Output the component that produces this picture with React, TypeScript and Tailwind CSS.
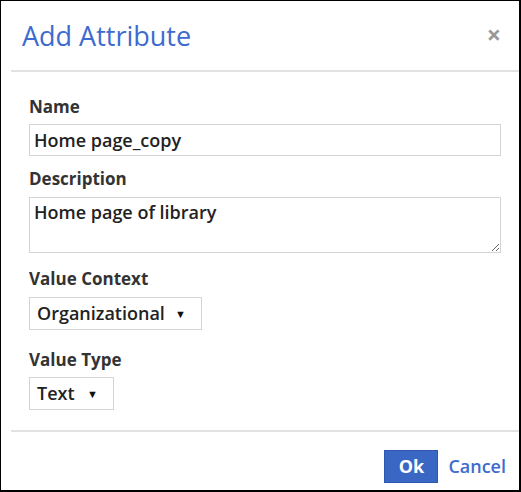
import React from 'react';

const Caret: React.FC = () => (
  <span className="text-[11px] leading-none text-[#111]">▼</span>
);

const App: React.FC = () => {
  return (
    <div className="w-[521px] h-[492px] bg-white border-l border-t border-r-2 border-b-2 border-black font-['Open_Sans',sans-serif] text-[#333] flex flex-col">
      {/* Header */}
      <div className="flex items-start justify-between h-[69px] pl-[21px] pr-[18px] pt-[16px]">
        <h1 className="text-[27px] leading-[38px] text-[#3d6bcf] font-normal">Add Attribute</h1>
        <button className="text-[25px] leading-none font-bold text-[#999] mt-[5px]">×</button>
      </div>
      <div className="ml-[10px] h-[2px] bg-[#e2e2e2]" />

      {/* Body */}
      <div className="flex flex-col pl-[28px] pr-[18px] pt-[25px] flex-1">
        <label className="text-[17px] leading-[20px] font-bold text-[#333]">Name</label>
        <input
          readOnly
          value="Home page_copy"
          className="mt-[7px] h-[32px] w-full border border-[#d4d4d4] px-[4px] text-[18px] font-semibold text-[#222] outline-none"
        />
        <label className="mt-[13px] text-[17px] leading-[20px] font-bold text-[#333]">Description</label>
        <textarea
          readOnly
          value="Home page of library"
          className="mt-[8px] h-[56px] w-full border border-[#d4d4d4] px-[4px] py-[2px] text-[18px] font-semibold leading-[24px] text-[#222] outline-none resize-y"
        />
        <label className="mt-[16px] text-[17px] leading-[20px] font-bold text-[#333]">Value Context</label>
        <div className="mt-[8px] h-[33px] w-[173px] border border-[#d4d4d4] flex items-center pl-[7px] pr-[15px] justify-between">
          <span className="text-[18px] font-semibold text-[#222]">Organizational</span>
          <Caret />
        </div>
        <label className="mt-[20px] text-[17px] leading-[20px] font-bold text-[#333]">Value Type</label>
        <div className="mt-[7px] h-[33px] w-[85px] border border-[#d4d4d4] flex items-center pl-[7px] pr-[15px] justify-between">
          <span className="text-[18px] font-semibold text-[#222]">Text</span>
          <Caret />
        </div>
      </div>

      {/* Footer */}
      <div className="ml-[10px] h-[2px] bg-[#e2e2e2]" />
      <div className="flex items-start justify-end h-[58px] pr-[13px] gap-[10px] pt-[18px]">
        <button className="w-[54px] h-[33px] bg-[#3a66c4] border border-[#2f58b0] text-white text-[18px] font-bold">Ok</button>
        <button className="h-[33px] text-[18px] font-semibold text-[#3d6bcf]">Cancel</button>
      </div>
    </div>
  );
};

export default App;
